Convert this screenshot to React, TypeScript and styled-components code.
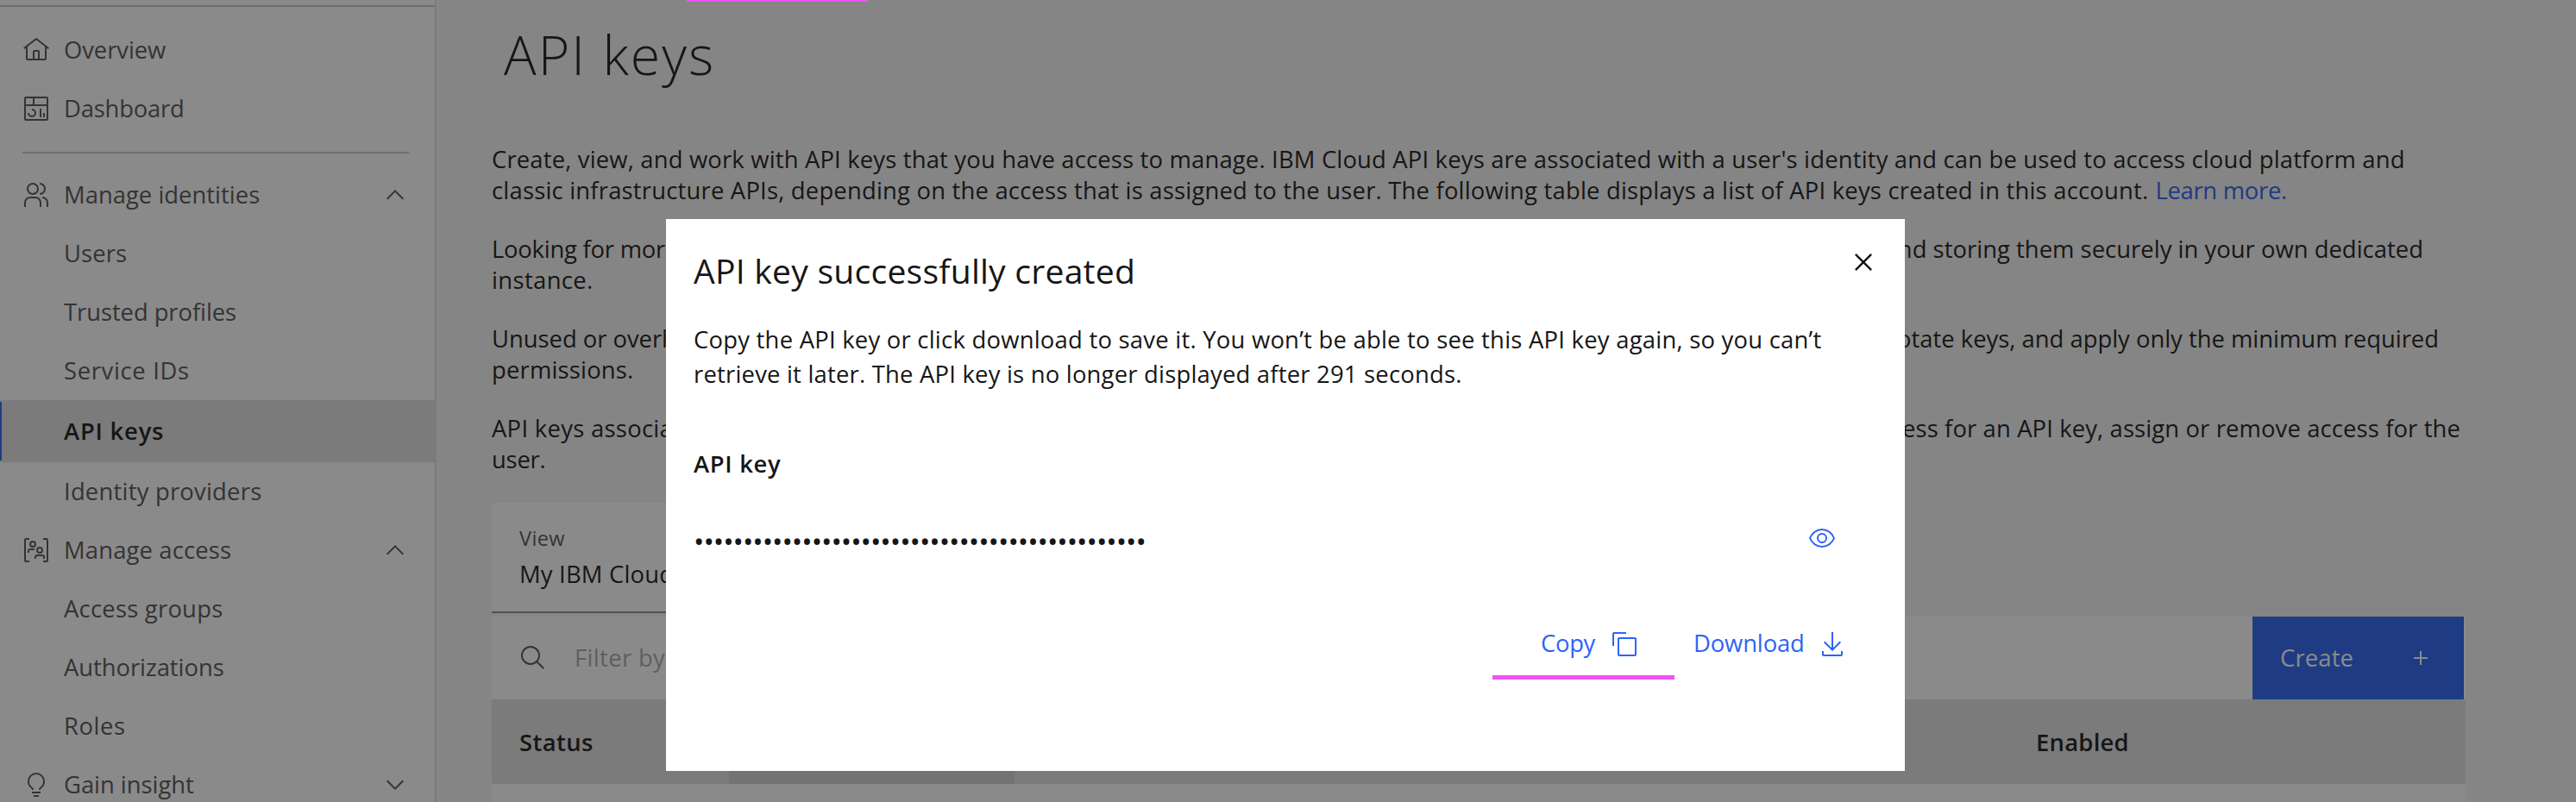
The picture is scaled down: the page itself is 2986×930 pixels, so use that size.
import React from "react";
import styled, { createGlobalStyle, css } from "styled-components";

const GlobalStyle = createGlobalStyle`
  * { box-sizing: border-box; }
  body {
    margin: 0;
    overflow: hidden;
    background: #f4f4f4;
    color: #161616;
    font-family: "Open Sans", "Noto Sans", sans-serif;
    font-size: 27.4px;
    line-height: 37px;
  }
  h1, h2, h3, p { margin: 0; font-size: inherit; font-weight: 400; }
  button {
    border: 0;
    padding: 0;
    background: none;
    color: inherit;
    font: inherit;
  }
`;

/* ---------- icons ---------- */

const icons = {
  home: "M16.6123,2.2138a1.01,1.01,0,0,0-1.2427,0L1,13.4194l1.2427,1.5717L4,13.621V26a2.0041,2.0041,0,0,0,2,2H26a2.0037,2.0037,0,0,0,2-2V13.63L29.7573,15,31,13.4282ZM18,26H14V18h4Zm2,0V18a2.0023,2.0023,0,0,0-2-2H14a2.002,2.002,0,0,0-2,2v8H6V12.0615l10-7.79,10,7.8005V26Z",
  dashboard:
    "M24 21H26V26H24z M20 16H22V26H20z M11 26a5.0059 5.0059 0 0 1-5-5H8a3 3 0 1 0 3-3V16a5 5 0 0 1 0 10z M28,2H4A2.002,2.002,0,0,0,2,4V28a2.0023,2.0023,0,0,0,2,2H28a2.0027,2.0027,0,0,0,2-2V4A2.0023,2.0023,0,0,0,28,2Zm0,9H14V4H28ZM12,4v7H4V4ZM4,28V13H28V28Z",
  users:
    "M30,30H28V25a5.0057,5.0057,0,0,0-5-5V18a7.0078,7.0078,0,0,1,7,7Z M22,30H20V25a5.0059,5.0059,0,0,0-5-5H9a5.0059,5.0059,0,0,0-5,5v5H2V25a7.0082,7.0082,0,0,1,7-7h6a7.0082,7.0082,0,0,1,7,7Z M20,2V4a5,5,0,0,1,0,10v2A7,7,0,0,0,20,2Z M12,4A5,5,0,1,1,7,9a5,5,0,0,1,5-5m0-2a7,7,0,1,0,7,7A7,7,0,0,0,12,2Z",
  idea: "M11 24H21V26H11z M13 28H19V30H13z M16,2A10,10,0,0,0,6,12a9.19,9.19,0,0,0,3.46,7.62c1,.93,1.54,1.46,1.54,2.38h2c0-1.84-1.11-2.87-2.19-3.86A7.2,7.2,0,0,1,8,12a8,8,0,0,1,16,0,7.2,7.2,0,0,1-2.82,6.14c-1.07,1-2.18,2-2.18,3.86h2c0-.92.53-1.45,1.54-2.39A9.18,9.18,0,0,0,26,12,10,10,0,0,0,16,2Z",
  chevronUp: "M16 10 26 20 24.6 21.4 16 12.8 7.4 21.4 6 20z",
  chevronDown: "M16 22 6 12 7.4 10.6 16 19.2 24.6 10.6 26 12z",
  search:
    "M29,27.5859l-7.5521-7.5521a11.0177,11.0177,0,1,0-1.4141,1.4141L27.5859,29ZM4,13a9,9,0,1,1,9,9A9.01,9.01,0,0,1,4,13Z",
  add: "M17 15V8H15V15H8V17H15V24H17V17H24V15z",
  close:
    "M24 9.4 22.6 8 16 14.6 9.4 8 8 9.4 14.6 16 8 22.6 9.4 24 16 17.4 22.6 24 24 22.6 17.4 16z",
  view: "M30.94,15.66A16.69,16.69,0,0,0,16,5,16.69,16.69,0,0,0,1.06,15.66a1,1,0,0,0,0,.68A16.69,16.69,0,0,0,16,27,16.69,16.69,0,0,0,30.94,16.34,1,1,0,0,0,30.94,15.66ZM16,25c-5.3,0-10.9-3.93-12.93-9C5.1,10.93,10.7,7,16,7s10.9,3.93,12.93,9C26.9,21.07,21.3,25,16,25Z M16,10a6,6,0,1,0,6,6A6,6,0,0,0,16,10Zm0,10a4,4,0,1,1,4-4A4,4,0,0,1,16,20Z",
  copy: "M28,10V28H10V10H28m0-2H10a2,2,0,0,0-2,2V28a2,2,0,0,0,2,2H28a2,2,0,0,0,2-2V10a2,2,0,0,0-2-2Z M4,18H2V4A2,2,0,0,1,4,2H18V4H4Z",
  download:
    "M26,24v4H6V24H4v4a2,2,0,0,0,2,2H26a2,2,0,0,0,2-2V24Z M26 14 24.59 12.59 17 20.17 17 2 15 2 15 20.17 7.41 12.59 6 14 16 24z",
};

const Svg = styled.svg<{ $size?: number }>`
  display: block;
  flex: none;
  width: ${(p) => p.$size ?? 32}px;
  height: ${(p) => p.$size ?? 32}px;
  fill: currentColor;
`;

const Icon = ({ name, size }: { name: keyof typeof icons; size?: number }) => (
  <Svg viewBox="0 0 32 32" $size={size}>
    <path d={icons[name]} />
  </Svg>
);

const GroupAccessIcon = () => (
  <Svg viewBox="0 0 32 32">
    <g fill="none" stroke="currentColor" strokeWidth="2">
      <path d="M8 3H4a1 1 0 0 0-1 1v24a1 1 0 0 0 1 1h4M24 3h4a1 1 0 0 1 1 1v24a1 1 0 0 1-1 1h-4" />
      <circle cx="12" cy="9" r="3" />
      <circle cx="20" cy="16" r="3" />
      <path d="M7 19v-2a2 2 0 0 1 2-2h5M15 26v-2a2 2 0 0 1 2-2h6a2 2 0 0 1 2 2v2" />
    </g>
  </Svg>
);

/* ---------- page shell ---------- */

const Page = styled.div`
  position: relative;
  display: flex;
  width: 2986px;
  height: 930px;
  overflow: hidden;
`;

const Sidebar = styled.nav`
  flex: none;
  width: 506px;
  height: 930px;
  overflow: hidden;
  background: #fff;
  border-right: 2px solid #e0e0e0;
  color: #525252;
`;

const SidebarTop = styled.div`
  height: 8px;
  margin-bottom: 16px;
  border-bottom: 2px solid #c6c6c6;
`;

const NavDivider = styled.div`
  height: 2px;
  margin: 16px 30px 14px 26px;
  background: #c6c6c6;
`;

const Tracked = styled.span<{ $track?: number }>`
  letter-spacing: ${(p) => p.$track ?? 0}px;
  white-space: nowrap;
`;

const NavRow = styled.div<{ $active?: boolean }>`
  display: grid;
  grid-template-columns: 32px 1fr 32px;
  column-gap: 16px;
  align-items: center;
  height: 68px;
  padding: 0 30px 0 26px;

  ${Tracked} {
    grid-column: 2;
    margin-bottom: 1px;
  }

  ${(p) =>
    p.$active &&
    css`
      height: 72px;
      background: linear-gradient(#2660f0, #2660f0) 0 2px / 2px 68px no-repeat #e0e0e0;
      color: #161616;
      font-weight: 600;
    `}
`;

const Main = styled.main`
  flex: 1;
  min-width: 0;
  padding: 23px 0 0 64px;
`;

const PageTitle = styled.h1`
  padding-left: 14px;
  font-size: 62.6px;
  font-weight: 300;
  line-height: 80px;
  letter-spacing: 2.05px;
`;

const Intro = styled.div`
  display: flex;
  flex-direction: column;
  gap: 32px;
  margin-top: 64px;
  line-height: 36px;
`;

const TextLine = styled.div<{ $width?: number }>`
  display: flex;
  gap: 8px;
  width: ${(p) => (p.$width ? `${p.$width}px` : "auto")};
  justify-content: ${(p) => (p.$width ? "space-between" : "flex-start")};
`;

const Link = styled.a`
  color: #2660f0;
  letter-spacing: -0.28px;
`;

/* ---------- view selector and table ---------- */

const ViewSelect = styled.div`
  width: 760px;
  height: 128px;
  margin-top: 32px;
  padding: 23px 32px 0;
  background: #fff;
  border-bottom: 2px solid #8d8d8d;
`;

const ViewLabel = styled.div`
  color: #525252;
  font-size: 23.5px;
  line-height: 36px;
  letter-spacing: 0.4px;
`;

const ViewValue = styled.div`
  margin-top: 5px;
`;

const TablePanel = styled.section`
  width: 2288px;
  margin-top: 4px;
  background: #fff;
`;

const TableToolbar = styled.div`
  display: flex;
  align-items: center;
  height: 96px;
  padding: 0 2px 0 32px;
  color: #525252;
`;

const Placeholder = styled.span`
  flex: 1;
  padding: 0 0 1px 32px;
  color: #a8a8a8;
  letter-spacing: 0.36px;
`;

const CreateButton = styled.button`
  display: flex;
  justify-content: space-between;
  align-items: center;
  width: 245px;
  height: 96px;
  padding: 0 34px 0 32px;
  background: #2660f0;
  color: #fff;

  ${Tracked} {
    margin-bottom: 2px;
  }
`;

const HeaderRow = styled.div`
  display: grid;
  grid-template-columns: 275px 331px 1152px 1fr;
  height: 98px;
  background: #e0e0e0;
  font-weight: 600;
`;

const HeaderCell = styled.div<{ $sorted?: boolean }>`
  padding: 31px 32px 0;
  background: ${(p) => (p.$sorted ? "#d1d1d1" : "transparent")};
`;

const TableBody = styled.div`
  height: 40px;
`;

/* ---------- modal ---------- */

const Overlay = styled.div`
  position: absolute;
  inset: 0;
  background: rgba(22, 22, 22, 0.5);
`;

const TabMarker = styled.div`
  position: absolute;
  top: 0;
  left: 796px;
  width: 210px;
  height: 2px;
  background: #ee53f8;
`;

const Modal = styled.section`
  position: absolute;
  top: 254px;
  left: 772px;
  width: 1436px;
  height: 640px;
  padding: 30px 28px 0 32px;
  background: #fff;
`;

const ModalHeader = styled.header`
  display: flex;
  justify-content: space-between;
  align-items: flex-start;
`;

const ModalTitle = styled.h2`
  padding-top: 2px;
  font-size: 39.1px;
  line-height: 56px;
  letter-spacing: 0.24px;
`;

const ModalText = styled.p`
  margin-top: 32px;
  line-height: 40px;
`;

const FieldLabel = styled.h3`
  margin-top: 65px;
  font-weight: 600;
  letter-spacing: 0.69px;
`;

const SecretRow = styled.div`
  display: flex;
  justify-content: space-between;
  align-items: center;
  height: 72px;
  margin-top: 32px;
  padding-right: 52px;
  color: #2f63f6;
`;

const Secret = styled.span`
  padding-top: 6px;
  color: #161616;
  font-size: 33px;
  letter-spacing: -1.02px;
`;

const Actions = styled.footer`
  display: flex;
  justify-content: flex-end;
  gap: 22px;
  margin-top: 54px;
  padding-right: 40px;
`;

const Action = styled.button<{ $marked?: boolean }>`
  display: flex;
  align-items: center;
  justify-content: space-between;
  width: ${(p) => (p.$marked ? 211 : 177)}px;
  height: 74px;
  padding: ${(p) => (p.$marked ? "0 42px 3px 56px" : "0 0 3px 0")};
  border-bottom: 5px solid ${(p) => (p.$marked ? "#ee53f8" : "transparent")};
  color: #2f63f6;

  ${Tracked} {
    margin-bottom: 4px;
  }
`;

export default function App() {
  return (
    <>
      <GlobalStyle />
      <Page>
        <Sidebar>
          <SidebarTop />
          <NavRow><Icon name="home" /><Tracked $track={-0.07}>Overview</Tracked></NavRow>
          <NavRow><Icon name="dashboard" /><Tracked $track={-0.19}>Dashboard</Tracked></NavRow>
          <NavDivider />
          <NavRow><Icon name="users" /><Tracked $track={0.02}>Manage identities</Tracked><Icon name="chevronUp" /></NavRow>
          <NavRow><Tracked $track={0.11}>Users</Tracked></NavRow>
          <NavRow><Tracked $track={-0.06}>Trusted profiles</Tracked></NavRow>
          <NavRow><Tracked $track={0.67}>Service IDs</Tracked></NavRow>
          <NavRow $active><Tracked $track={0.79}>API keys</Tracked></NavRow>
          <NavRow><Tracked $track={0.23}>Identity providers</Tracked></NavRow>
          <NavRow><GroupAccessIcon /><Tracked $track={0.16}>Manage access</Tracked><Icon name="chevronUp" /></NavRow>
          <NavRow><Tracked $track={0.24}>Access groups</Tracked></NavRow>
          <NavRow><Tracked $track={-0.05}>Authorizations</Tracked></NavRow>
          <NavRow><Tracked $track={0.59}>Roles</Tracked></NavRow>
          <NavRow><Icon name="idea" /><Tracked $track={-0.02}>Gain insight</Tracked><Icon name="chevronDown" /></NavRow>
        </Sidebar>

        <Main>
          <PageTitle>API keys</PageTitle>
          <Intro>
            <div>
              <TextLine>
                <Tracked $track={0.18}>
                  Create, view, and work with API keys that you have access to manage. IBM Cloud API keys are associated with a user's identity and can be used to access cloud platform and
                </Tracked>
              </TextLine>
              <TextLine>
                <Tracked $track={0.21}>
                  classic infrastructure APIs, depending on the access that is assigned to the user. The following table displays a list of API keys created in this account.
                </Tracked>
                <Link>Learn more.</Link>
              </TextLine>
            </div>
            <div>
              <TextLine $width={2239}>
                <Tracked $track={-0.22}>Looking for more</Tracked>
                <Tracked $track={0.03}>and storing them securely in your own dedicated</Tracked>
              </TextLine>
              <TextLine><Tracked $track={0.38}>instance.</Tracked></TextLine>
            </div>
            <div>
              <TextLine $width={2257}>
                <Tracked $track={-0.02}>Unused or overly</Tracked>
                <Tracked>rotate keys, and apply only the minimum required</Tracked>
              </TextLine>
              <TextLine><Tracked $track={0.19}>permissions.</Tracked></TextLine>
            </div>
            <div>
              <TextLine $width={2282}>
                <Tracked $track={0.3}>API keys associated</Tracked>
                <Tracked $track={0.13}>access for an API key, assign or remove access for the</Tracked>
              </TextLine>
              <TextLine><Tracked $track={-0.22}>user.</Tracked></TextLine>
            </div>
          </Intro>

          <ViewSelect>
            <ViewLabel>View</ViewLabel>
            <ViewValue><Tracked $track={0.2}>My IBM Cloud</Tracked></ViewValue>
          </ViewSelect>

          <TablePanel>
            <TableToolbar>
              <Icon name="search" />
              <Placeholder>Filter by</Placeholder>
              <CreateButton><Tracked $track={0.15}>Create</Tracked><Icon name="add" /></CreateButton>
            </TableToolbar>
            <HeaderRow>
              <HeaderCell><Tracked $track={0.4}>Status</Tracked></HeaderCell>
              <HeaderCell $sorted />
              <HeaderCell />
              <HeaderCell><Tracked $track={0.25}>Enabled</Tracked></HeaderCell>
            </HeaderRow>
            <TableBody />
          </TablePanel>
        </Main>

        <Overlay />
        <TabMarker />

        <Modal>
          <ModalHeader>
            <ModalTitle>API key successfully created</ModalTitle>
            <Icon name="close" size={40} />
          </ModalHeader>
          <ModalText>
            <Tracked $track={0.25}>
              Copy the API key or click download to save it. You won’t be able to see this API key again, so you can’t
            </Tracked>
            <br />
            <Tracked $track={0.22}>
              retrieve it later. The API key is no longer displayed after 291 seconds.
            </Tracked>
          </ModalText>
          <FieldLabel>API key</FieldLabel>
          <SecretRow>
            <Secret>{"•".repeat(46)}</Secret>
            <Icon name="view" />
          </SecretRow>
          <Actions>
            <Action $marked><Tracked $track={-0.3}>Copy</Tracked><Icon name="copy" /></Action>
            <Action><Tracked $track={-0.13}>Download</Tracked><Icon name="download" /></Action>
          </Actions>
        </Modal>
      </Page>
    </>
  );
}
